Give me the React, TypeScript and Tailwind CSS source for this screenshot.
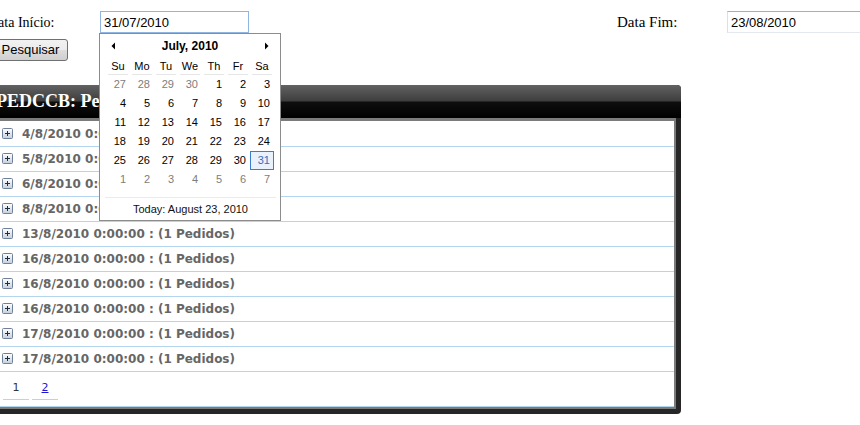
import React from "react";

const ROWS = [
  "4/8/2010 0:00:00 : (1 Pedidos)",
  "5/8/2010 0:00:00 : (1 Pedidos)",
  "6/8/2010 0:00:00 : (1 Pedidos)",
  "8/8/2010 0:00:00 : (1 Pedidos)",
  "13/8/2010 0:00:00 : (1 Pedidos)",
  "16/8/2010 0:00:00 : (1 Pedidos)",
  "16/8/2010 0:00:00 : (1 Pedidos)",
  "16/8/2010 0:00:00 : (1 Pedidos)",
  "17/8/2010 0:00:00 : (1 Pedidos)",
  "17/8/2010 0:00:00 : (1 Pedidos)",
];

const DAY_NAMES = ["Su", "Mo", "Tu", "We", "Th", "Fr", "Sa"];

// july 2010 grid, 6 weeks; "other" marks days outside the month
const buildDays = () => {
  const days: { n: number; other: boolean }[] = [];
  [27, 28, 29, 30].forEach((n) => days.push({ n, other: true }));
  for (let n = 1; n <= 31; n++) days.push({ n, other: false });
  for (let n = 1; n <= 7; n++) days.push({ n, other: true });
  return days;
};

function ExpandIcon() {
  return (
    <svg width="11" height="11" viewBox="0 0 11 11" className="shrink-0">
      <defs>
        <linearGradient id="exp" x1="0" y1="0" x2="0" y2="1">
          <stop offset="0" stopColor="#ffffff" />
          <stop offset="1" stopColor="#c4cfdd" />
        </linearGradient>
      </defs>
      <rect x="0.5" y="0.5" width="10" height="10" rx="1" fill="url(#exp)" stroke="#6f8098" />
      <path d="M3 5.5h5M5.5 3v5" stroke="#1e2c40" strokeWidth="1" />
    </svg>
  );
}

function Calendar() {
  const days = buildDays();
  return (
    <div className="absolute left-[99px] top-[33px] h-[188px] w-[182px] border border-[#8c8c8c] bg-white font-['Liberation_Sans',Arial,sans-serif] text-[11px] text-black">
      <div className="flex h-[24px] items-center justify-between px-[11px]">
        <svg width="5" height="8" viewBox="0 0 5 8">
          <path d="M4 0.5L0.5 4L4 7.5Z" fill="#000" />
        </svg>
        <span className="text-[12px] font-bold">July, 2010</span>
        <svg width="5" height="8" viewBox="0 0 5 8">
          <path d="M1 0.5L4.5 4L1 7.5Z" fill="#000" />
        </svg>
      </div>
      <div className="ml-[6px] grid w-[168px] grid-cols-7">
        {DAY_NAMES.map((d) => (
          <div key={d} className="flex h-[17px] px-[2px]">
            <span className="flex w-full items-center justify-center border-b border-[#e6e6e6]">{d}</span>
          </div>
        ))}
        {days.map((d, i) => {
          const selected = !d.other && d.n === 31;
          return (
            <div
              key={i}
              className={
                selected
                  ? "flex h-[19px] items-center justify-end border border-[#3b7dd0] bg-[#e8f1fc] pr-[3px] text-[#3a6eb5]"
                  : d.other
                    ? "flex h-[19px] items-center justify-end pr-[4px] text-[#7d7d7d]"
                    : "flex h-[19px] items-center justify-end pr-[4px]"
              }
            >
              {d.n}
            </div>
          );
        })}
      </div>
      <div className="ml-[5px] mr-[4px] mt-[8px] flex h-[23px] items-center justify-center border-t border-[#ebebeb] text-[#111]">
        Today: August 23, 2010
      </div>
    </div>
  );
}

export default function App() {
  return (
    <div className="relative h-[425px] w-[860px] overflow-hidden bg-white font-['Liberation_Serif',serif] text-black">
      <div className="-ml-[20px] w-[920px]">
        <div className="flex items-center pt-[11px]">
          <span className="w-[120px] pl-[8px] text-[14px]">Data Início:</span>
          <input
            readOnly
            value="31/07/2010"
            className="h-[22px] w-[149px] border border-[#8fb5e0] px-[3px] font-['Liberation_Sans',Arial,sans-serif] text-[13px] outline-none"
          />
          <span className="ml-[368px] w-[110px] text-[15px]">Data Fim:</span>
          <input
            readOnly
            value="23/08/2010"
            className="h-[22px] w-[149px] border border-b-[#e3e9ef] border-l-[#dbdfe6] border-r-[#dbdfe6] border-t-[#abadb3] px-[3px] font-['Liberation_Sans',Arial,sans-serif] text-[13px] outline-none"
          />
        </div>

        <button
          type="button"
          className="ml-[13px] mt-[5px] block h-[22px] w-[75px] rounded-[3px] border border-[#707070] bg-[linear-gradient(to_bottom,#f2f2f2_0%,#ebebeb_50%,#dddddd_51%,#cfcfcf_100%)] font-['Liberation_Sans',Arial,sans-serif] text-[13px]"
        >
          Pesquisar
        </button>

        <div className="mt-[24px] w-[701px] rounded-[4px] bg-[#262626]">
          <div className="flex h-[33px] items-center rounded-t-[4px] bg-[linear-gradient(to_bottom,#626262_0%,#3e3e3e_48%,#0e0e0e_52%,#000000_100%)] pl-[16px] text-[18px] font-bold text-white">
            PEDCCB: Pedidos
          </div>
          <div className="pb-[5px] pl-[5px] pr-[5px]">
            <div className="border-x-2 border-b-2 border-t-[3px] border-[#7b7b7b] bg-white pt-[1px]">
              {ROWS.map((row, i) => (
                <div
                  key={i}
                  className="flex h-[25px] items-center border-b border-[#b3d6ee] pl-[15px]"
                >
                  <ExpandIcon />
                  <span className="ml-[9px] font-['DejaVu_Sans',Verdana,sans-serif] text-[12px] font-bold text-[#666]">
                    {row}
                  </span>
                </div>
              ))}
              <div className="flex h-[35px] gap-[3px] border-b border-[#b3d6ee] pl-[16px] pt-[7px] font-['DejaVu_Sans',Verdana,sans-serif] text-[11px]">
                <span className="flex h-[21px] w-[26px] items-center justify-center border-b border-[#b3d6ee] text-[#333]">
                  1
                </span>
                <span className="flex h-[21px] w-[26px] items-center justify-center border-b border-[#b3d6ee] text-[#1a1ad0] underline">
                  2
                </span>
              </div>
            </div>
          </div>
        </div>
      </div>

      <Calendar />
    </div>
  );
}
